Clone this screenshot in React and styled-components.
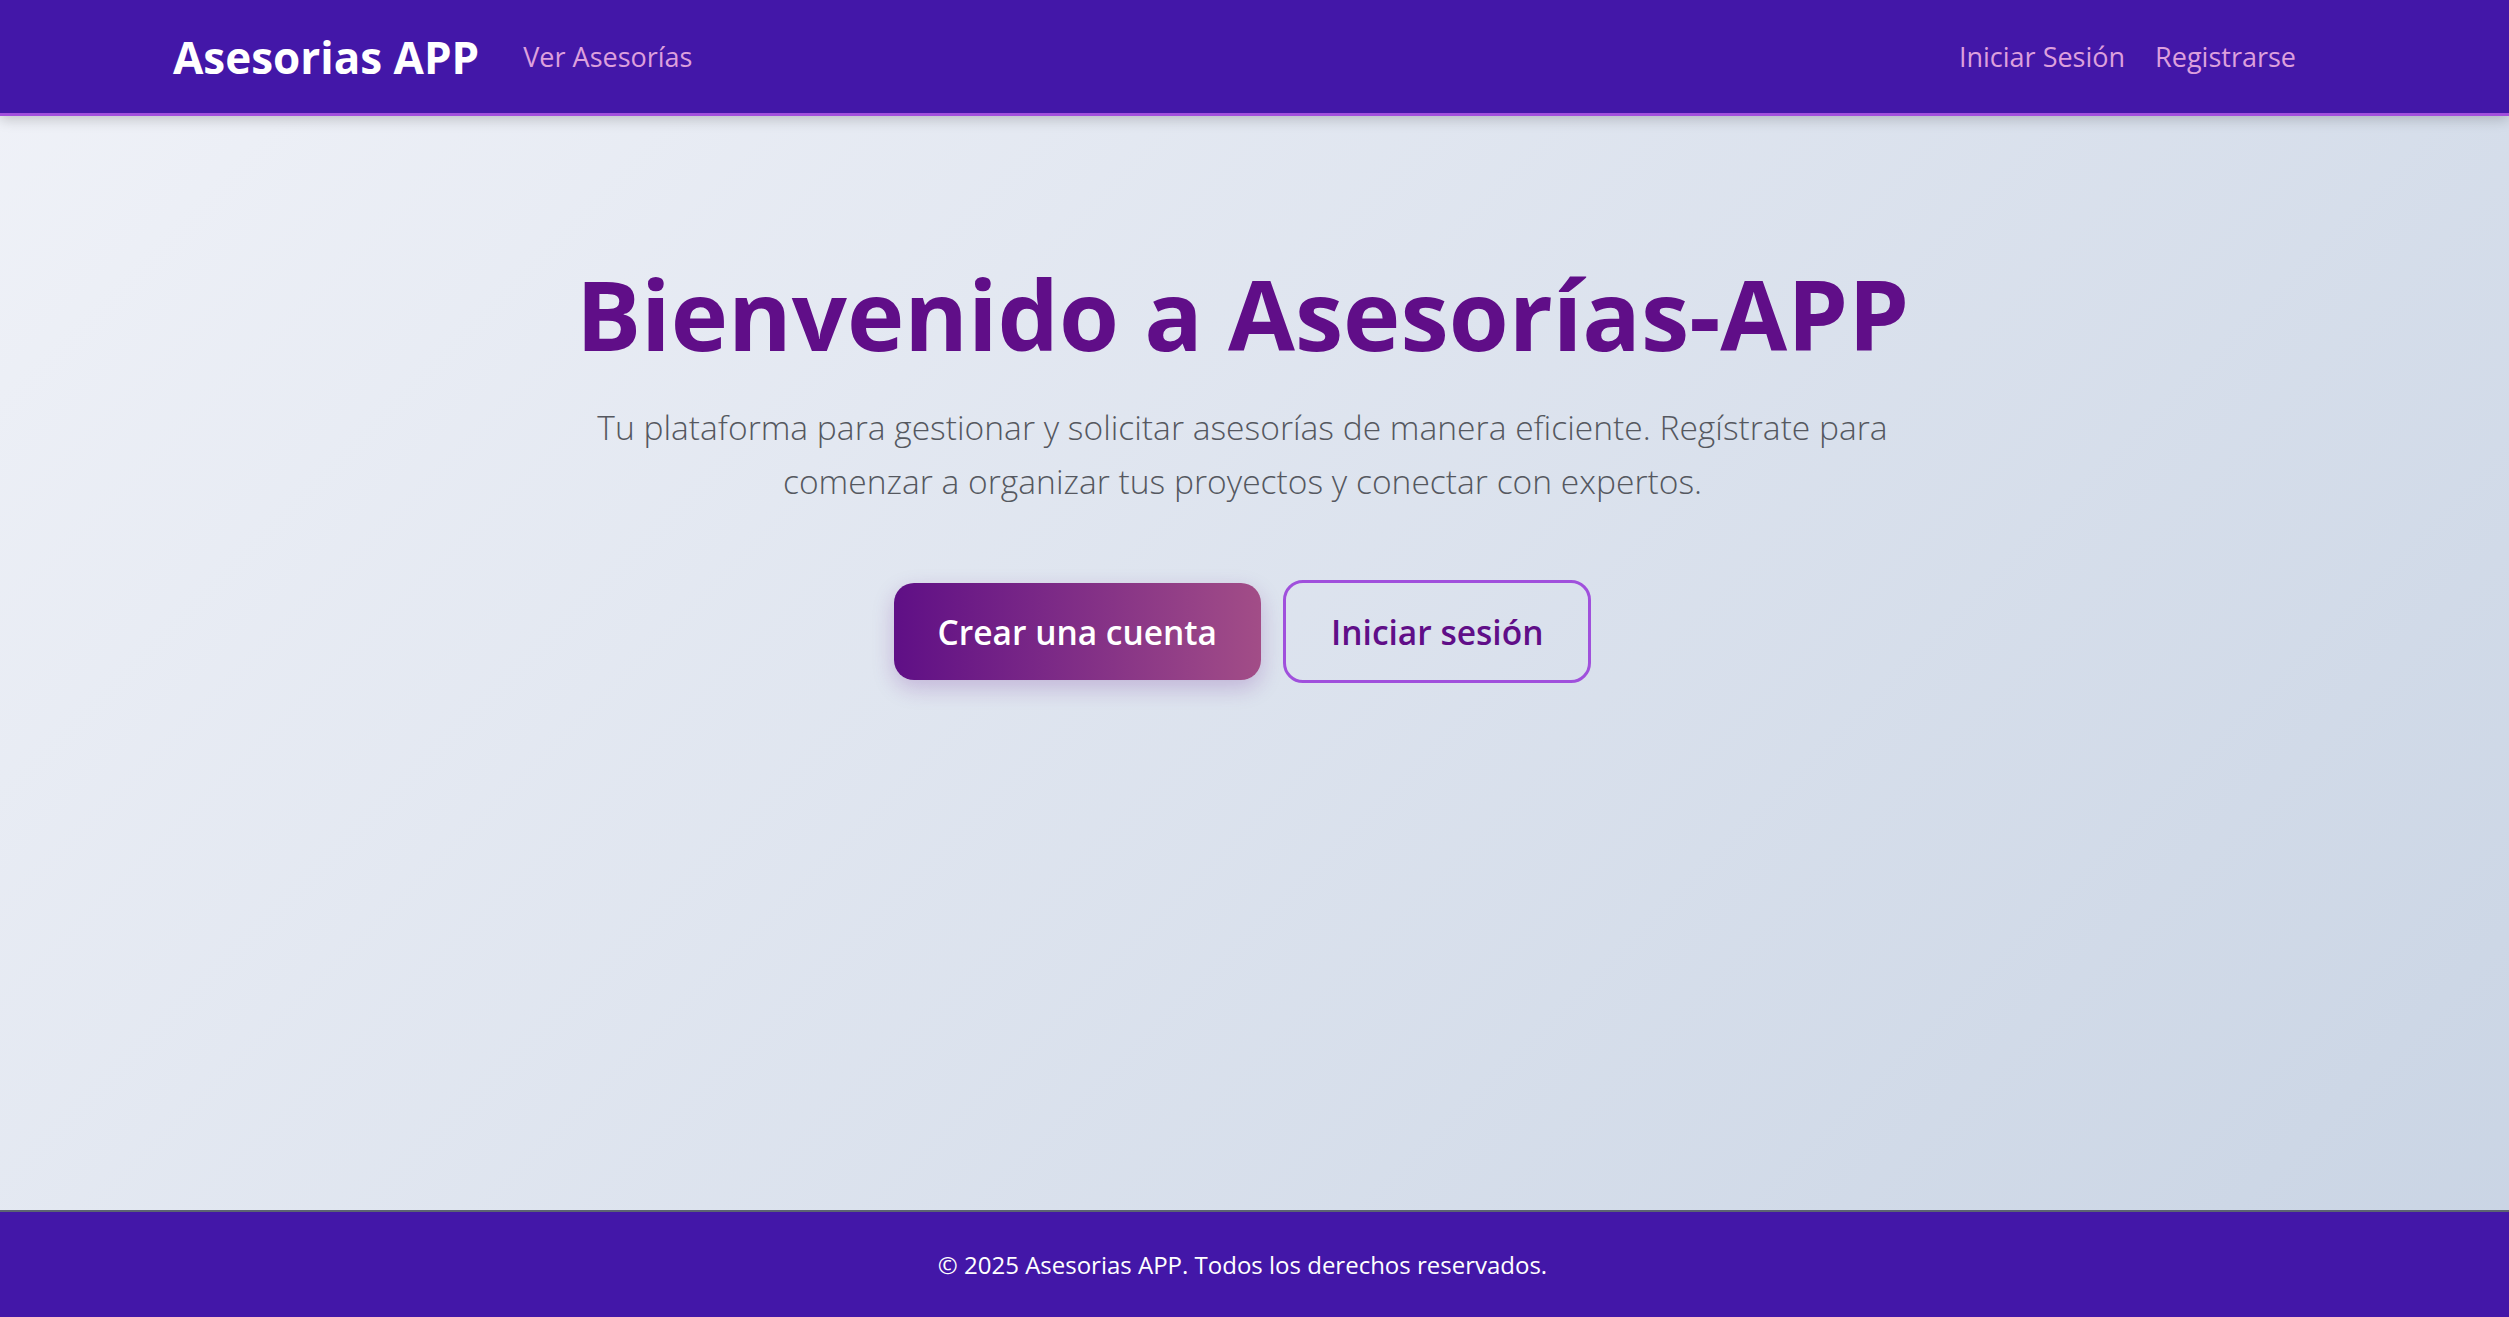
import styled, { createGlobalStyle } from "styled-components";

const GlobalStyle = createGlobalStyle`
  * {
    box-sizing: border-box;
  }
  html, body {
    margin: 0;
    padding: 0;
  }
  body {
    font-family: "Segoe UI", "Open Sans", "Noto Sans", sans-serif;
  }
`;

const Page = styled.div`
  min-height: 100vh;
  display: flex;
  flex-direction: column;
  background: linear-gradient(135deg, #f0f2f8 0%, #c9d4e4 100%);
`;

const Navbar = styled.nav`
  height: 116px;
  background: #4317a8;
  border-bottom: 3px solid #a24fdc;
  box-shadow: 0 4px 12px rgba(0, 0, 0, 0.18);
  display: flex;
  align-items: center;
  justify-content: space-between;
  padding: 0 213px 0 173px;
  position: relative;
  z-index: 1;
`;

const NavGroup = styled.div`
  display: flex;
  align-items: center;
  gap: ${(p) => p.gap}px;
`;

const Logo = styled.a`
  color: #ffffff;
  font-size: 44px;
  font-weight: 700;
  text-decoration: none;
  margin-right: 44px;
`;

const NavLink = styled.a`
  color: #dda0dd;
  font-size: 27px;
  text-decoration: none;
`;

const Main = styled.main`
  flex: 1;
  display: flex;
  flex-direction: column;
  align-items: center;
  padding: 139px 24px 0 0;
`;

const Title = styled.h1`
  margin: 0;
  color: #600e88;
  font-size: 97px;
  font-weight: 700;
  line-height: 1.2;
`;

const Lead = styled.p`
  margin: 29px 0 0;
  max-width: 1360px;
  text-align: center;
  color: #55585f;
  font-size: 33.6px;
  font-weight: 300;
  line-height: 54px;
`;

const Actions = styled.div`
  display: flex;
  align-items: center;
  gap: 22px;
  margin-top: 72px;
`;

const Button = styled.a`
  display: inline-flex;
  align-items: center;
  justify-content: center;
  height: ${(p) => (p.outline ? 103 : 97)}px;
  padding: 0 ${(p) => (p.outline ? 45 : 44)}px;
  border-radius: 20px;
  font-size: 33.5px;
  font-weight: 600;
  text-decoration: none;
  color: ${(p) => (p.outline ? "#600e88" : "#ffffff")};
  background: ${(p) =>
    p.outline ? "transparent" : "linear-gradient(90deg, #5f0f86 0%, #a24d87 100%)"};
  border: ${(p) => (p.outline ? "3px solid #a050dc" : "none")};
  box-shadow: ${(p) => (p.outline ? "none" : "0 8px 22px rgba(96, 14, 136, 0.22)")};
`;

const Footer = styled.footer`
  height: 107px;
  background: #4317a8;
  border-top: 2px solid #5c6372;
  display: flex;
  align-items: center;
  justify-content: center;
  padding-right: 24px;
  color: #ffffff;
  font-size: 24px;
`;

export default function App() {
  return (
    <>
      <GlobalStyle />
      <Page>
        <Navbar>
          <NavGroup gap={0}>
            <Logo href="#">Asesorias APP</Logo>
            <NavLink href="#">Ver Asesorías</NavLink>
          </NavGroup>
          <NavGroup gap={30}>
            <NavLink href="#">Iniciar Sesión</NavLink>
            <NavLink href="#">Registrarse</NavLink>
          </NavGroup>
        </Navbar>
        <Main>
          <Title>Bienvenido a Asesorías-APP</Title>
          <Lead>
            Tu plataforma para gestionar y solicitar asesorías de manera eficiente. Regístrate para
            comenzar a organizar tus proyectos y conectar con expertos.
          </Lead>
          <Actions>
            <Button href="#">Crear una cuenta</Button>
            <Button href="#" outline>
              Iniciar sesión
            </Button>
          </Actions>
        </Main>
        <Footer>© 2025 Asesorias APP. Todos los derechos reservados.</Footer>
      </Page>
    </>
  );
}
